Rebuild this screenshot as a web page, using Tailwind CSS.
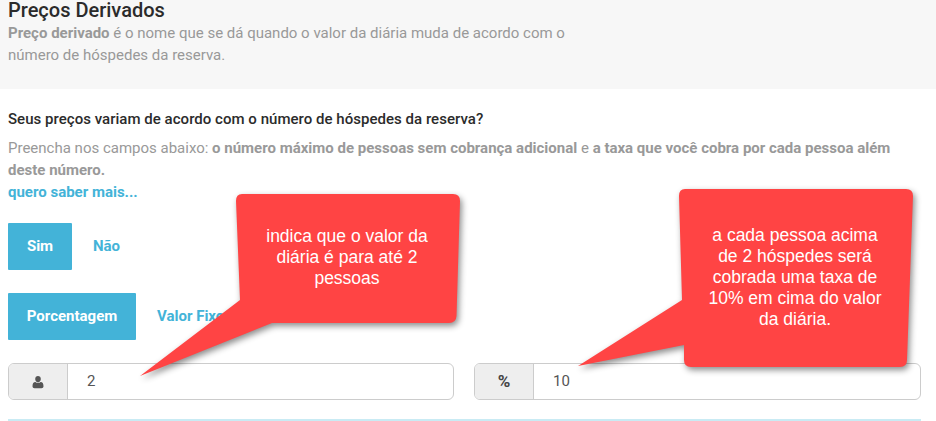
<!DOCTYPE html>
<html lang="pt-BR">
<head>
<meta charset="utf-8">
<title>Preços Derivados</title>
<script src="https://cdn.jsdelivr.net/npm/@tailwindcss/browser@4"></script>
</head>
<body class="relative w-[936px] h-[421px] overflow-hidden bg-white font-['Roboto',sans-serif] text-[15px] text-[#999]">

  <!-- header -->
  <div class="h-[89px] bg-[#f7f7f7] px-2">
    <h1 class="text-[20px] leading-[21px] font-medium text-[#2b2b2b]">Preços Derivados</h1>
    <p class="w-[580px] leading-[22px] mt-[1px]"><b class="font-bold">Preço derivado</b> é o nome que se dá quando o valor da diária muda de acordo com o número de hóspedes da reserva.</p>
  </div>

  <!-- content -->
  <div class="pl-2 pr-[15px] pt-[19px]">
    <p class="leading-[22px] font-medium tracking-[0.03px] text-[#2b2b2b]">Seus preços variam de acordo com o número de hóspedes da reserva?</p>
    <p class="leading-[22px] mt-[7px]">Preencha nos campos abaixo: <b class="font-bold">o número máximo de pessoas sem cobrança adicional</b> e <b class="font-bold">a taxa que você cobra por cada pessoa além deste número.</b></p>
    <a class="block leading-[22px] font-bold text-[#43b3d8]">quero saber mais...</a>

    <div class="flex items-center mt-[20px]">
      <span class="flex items-center justify-center w-[64px] h-[47px] bg-[#43b3d8] text-white font-bold rounded-[1px]">Sim</span>
      <span class="pl-[21px] text-[#43b3d8] font-bold">Não</span>
    </div>

    <div class="flex items-center mt-[23px]">
      <span class="flex items-center justify-center w-[128px] h-[47px] bg-[#43b3d8] text-white font-bold rounded-[1px]">Porcentagem</span>
      <span class="pl-[21px] text-[#43b3d8] font-bold">Valor Fixo</span>
    </div>

    <div class="flex justify-between mt-[23px]">
      <div class="flex w-[446px] h-[37px] border border-[#ccc] rounded-[6px] overflow-hidden">
        <span class="flex items-center justify-center w-[59px] bg-[#eee] border-r border-[#ccc]">
          <svg class="w-[12px] h-[14px]" viewBox="0 0 12 14" fill="#555"><path d="M6 1c1.700 0 2.800 1.300 2.800 3.100C8.800 5.900 7.700 7.400 6 7.400S3.200 5.900 3.200 4.100C3.200 2.300 4.300 1 6 1z"/><path d="M3.400 7c.7.7 1.600 1.100 2.600 1.100S7.900 7.700 8.600 7c1.900.1 2.900 1.400 2.900 4.300 0 1.300-.8 2-2 2h-7c-1.200 0-2-.7-2-2C.5 8.400 1.500 7.100 3.400 7z"/></svg>
        </span>
        <span class="flex items-center pl-[19px] text-[#555]">2</span>
      </div>
      <div class="flex w-[447px] h-[37px] border border-[#ccc] rounded-[6px] overflow-hidden">
        <span class="flex items-center justify-center w-[59px] bg-[#eee] border-r border-[#ccc] text-[#444] font-bold text-[17px]">%</span>
        <span class="flex items-center pl-[19px] text-[#555]">10</span>
      </div>
    </div>

    <div class="h-[2px] bg-[#c9ebf4] mt-[19px]"></div>
  </div>

  <!-- callouts drawn on top -->
  <svg class="absolute left-0 top-0 w-[936px] h-[421px] drop-shadow-[2px_3px_3px_rgba(0,0,0,0.45)]" viewBox="0 0 936 421" fill="#ff4444">
    <path d="M242 194H453Q460 194 460 201L456.500 316Q456 323 449 323H272L140 376L240 300L236 201Q236 194 242 194Z"/>
    <path d="M685 189H906Q913 189 913 196L907 360Q907 367 900 367H691Q684 367 684 360L684 345L578 366L682 300L679 196Q679 189 685 189Z"/>
  </svg>
  <p class="absolute left-[257px] top-[226px] w-[180px] text-center text-[17.5px] leading-[21px] text-white font-['Liberation_Sans',sans-serif]">indica que o valor da diária é para até 2 pessoas</p>
  <p class="absolute left-[705px] top-[225px] w-[180px] text-center text-[17.5px] leading-[21px] text-white font-['Liberation_Sans',sans-serif]">a cada pessoa acima de 2 hóspedes será cobrada uma taxa de 10% em cima do valor da diária.</p>
</body>
</html>
